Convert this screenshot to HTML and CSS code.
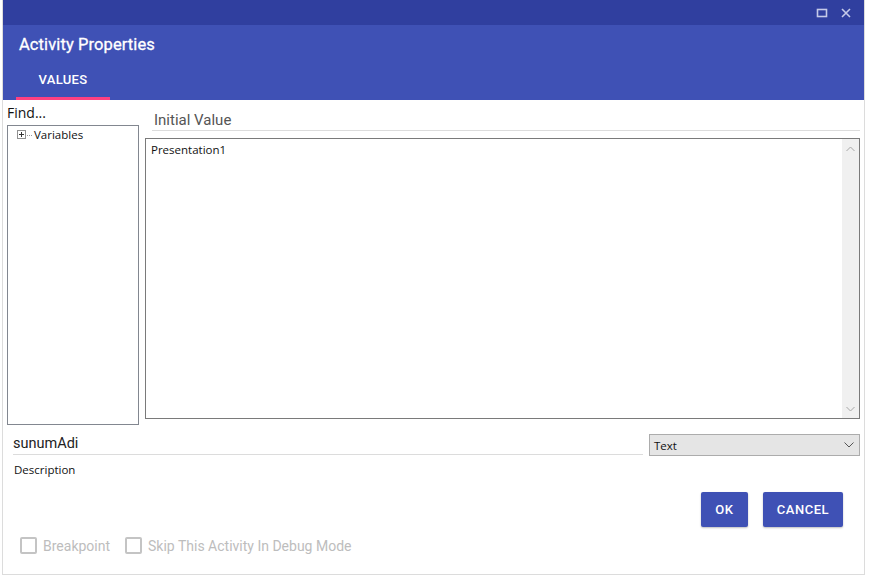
FILE: index.html
```html
<!DOCTYPE html>
<html lang="en">
<head>
    <meta charset="UTF-8">
    <title>Activity Properties</title>
    <link rel="stylesheet" href="styles.css">
</head>
<body>
<div class="window">
    <div class="titlebar">
        <span class="win-btn">
            <svg width="12" height="12" viewBox="0 0 12 12"><rect x="1.5" y="2.5" width="9" height="7" fill="none" stroke="#c5cae9" stroke-width="1.6"/></svg>
        </span>
        <span class="win-btn">
            <svg width="12" height="12" viewBox="0 0 12 12"><path d="M2 2 L10 10 M10 2 L2 10" stroke="#c5cae9" stroke-width="1.6"/></svg>
        </span>
    </div>

    <div class="header">
        <div class="title">Activity Properties</div>
        <div class="tabs">
            <div class="tab active">VALUES</div>
        </div>
    </div>

    <div class="content">
        <div class="main">
            <div class="side">
                <div class="find">Find...</div>
                <div class="tree">
                    <div class="tree-item">
                        <svg class="expander" width="9" height="9" viewBox="0 0 9 9"><rect x="0.5" y="0.5" width="8" height="8" fill="#fff" stroke="#919191"/><path d="M2 4.5 H7 M4.5 2 V7" stroke="#333"/></svg>
                        <span class="dots"></span>
                        <span>Variables</span>
                    </div>
                </div>
            </div>

            <div class="editor">
                <div class="field-label">Initial Value</div>
                <div class="textarea">
                    <div class="text">Presentation1</div>
                    <div class="scrollbar">
                        <svg width="9" height="6" viewBox="0 0 9 6"><path d="M0.5 5 L4.5 1 L8.5 5" fill="none" stroke="#a6a6a6"/></svg>
                        <svg width="9" height="6" viewBox="0 0 9 6"><path d="M0.5 1 L4.5 5 L8.5 1" fill="none" stroke="#a6a6a6"/></svg>
                    </div>
                </div>
            </div>
        </div>

        <div class="name-row">
            <div class="name">sunumAdi</div>
            <div class="select">
                <span>Text</span>
                <svg width="10" height="6" viewBox="0 0 10 6"><path d="M0.5 0.5 L5 5 L9.5 0.5" fill="none" stroke="#555"/></svg>
            </div>
        </div>

        <div class="desc">Description</div>

        <div class="actions">
            <button class="btn btn-ok">OK</button>
            <button class="btn">CANCEL</button>
        </div>

        <div class="checks">
            <label class="check"><span class="box"></span>Breakpoint</label>
            <label class="check"><span class="box"></span>Skip This Activity In Debug Mode</label>
        </div>
    </div>
</div>
</body>
</html>
```

FILE: styles.css
```css
body {
    margin: 0;
    background: #fff;
    font-family: Roboto, "Liberation Sans", sans-serif;
}
.window {
    margin-left: 2px;
    width: 863px;
    height: 575px;
    box-sizing: border-box;
    border: 1px solid #dcdcdc;
    border-top: none;
    display: flex;
    flex-direction: column;
}
.titlebar {
    height: 25px;
    background-color: #303f9f;
    display: flex;
    justify-content: flex-end;
    align-items: center;
    padding-right: 12px;
    gap: 12px;
}
.win-btn {
    display: flex;
}
.header {
    height: 75px;
    background-color: #3f51b5;
    display: flex;
    flex-direction: column;
    justify-content: space-between;
}
.title {
    color: #fff;
    font-size: 16.5px;
    font-weight: 400;
    letter-spacing: 0.1px;
    -webkit-text-stroke: 0.3px #fff;
    padding: 10px 0 0 16px;
}
.tabs {
    display: flex;
    padding-left: 13px;
}
.tab {
    width: 94px;
    text-align: center;
    color: #fff;
    font-size: 13px;
    font-weight: 500;
    letter-spacing: 0.3px;
    padding-bottom: 10px;
    border-bottom: 3px solid transparent;
}
.tab.active {
    border-bottom-color: #ff4081;
}
.content {
    flex: 1;
    padding: 0 4px;
}
.main {
    display: flex;
    gap: 6px;
}
.side {
    width: 132px;
    padding-top: 3px;
}
.find {
    height: 22px;
    font-family: "Open Sans", "Noto Sans", sans-serif;
    font-size: 14px;
    line-height: 19px;
    color: #111;
}
.tree {
    height: 300px;
    box-sizing: border-box;
    border: 1px solid #828790;
    padding: 1px 9px;
}
.tree-item {
    display: flex;
    align-items: center;
    font-family: "Open Sans", "Noto Sans", sans-serif;
    font-size: 11.5px;
    color: #111;
}
.dots {
    width: 5px;
    margin: 2px 2px 0 1px;
    border-top: 1px dotted #999;
}
.editor {
    flex: 1;
}
.field-label {
    margin: 11px 0 0 7px;
    height: 19px;
    line-height: 18px;
    font-size: 15px;
    color: #555;
    padding-left: 2px;
    border-bottom: 1px solid #dcdcdc;
}
.textarea {
    margin-top: 7px;
    height: 281px;
    box-sizing: border-box;
    border: 1px solid #7a7a7a;
    display: flex;
}
.text {
    flex: 1;
    padding: 3px 5px;
    font-family: "Open Sans", "Noto Sans", sans-serif;
    font-size: 11.5px;
    color: #111;
}
.scrollbar {
    width: 17px;
    background-color: #f0f0f0;
    display: flex;
    flex-direction: column;
    justify-content: space-between;
    align-items: center;
    padding: 7px 0 6px;
}
.name-row {
    margin-top: 9px;
    display: flex;
    gap: 6px;
}
.name {
    flex: 1;
    margin-left: 6px;
    height: 20px;
    line-height: 20px;
    font-size: 14.5px;
    color: #222;
    border-bottom: 1px solid #dcdcdc;
}
.select {
    width: 211px;
    height: 22px;
    box-sizing: border-box;
    border: 1px solid #acacac;
    background-color: #e5e5e5;
    display: flex;
    align-items: center;
    justify-content: space-between;
    padding: 0 5px 0 4px;
    font-family: "Open Sans", "Noto Sans", sans-serif;
    font-size: 11.5px;
    color: #111;
}
.desc {
    margin: 6px 0 0 7px;
    line-height: 16px;
    font-family: "Open Sans", "Noto Sans", sans-serif;
    font-size: 11.5px;
    color: #111;
}
.actions {
    margin-top: 14px;
    display: flex;
    justify-content: flex-end;
    gap: 15px;
    padding-right: 17px;
}
.btn {
    height: 35px;
    border: none;
    border-radius: 2px;
    background-color: #3f51b5;
    color: #fff;
    font-family: Roboto, sans-serif;
    font-size: 13px;
    font-weight: 500;
    letter-spacing: 0.5px;
    padding: 0 14px;
    box-shadow: 0 1px 2px rgba(0,0,0,0.25);
}
.btn-ok {
    width: 47px;
    padding: 0;
}
.checks {
    margin: 10px 0 0 13px;
    display: flex;
    gap: 15px;
}
.check {
    display: flex;
    align-items: center;
    gap: 6px;
    font-size: 14px;
    color: #bdbdbd;
}
.box {
    width: 17px;
    height: 17px;
    box-sizing: border-box;
    border: 2px solid #c4c4c4;
    border-radius: 2px;
}
```
